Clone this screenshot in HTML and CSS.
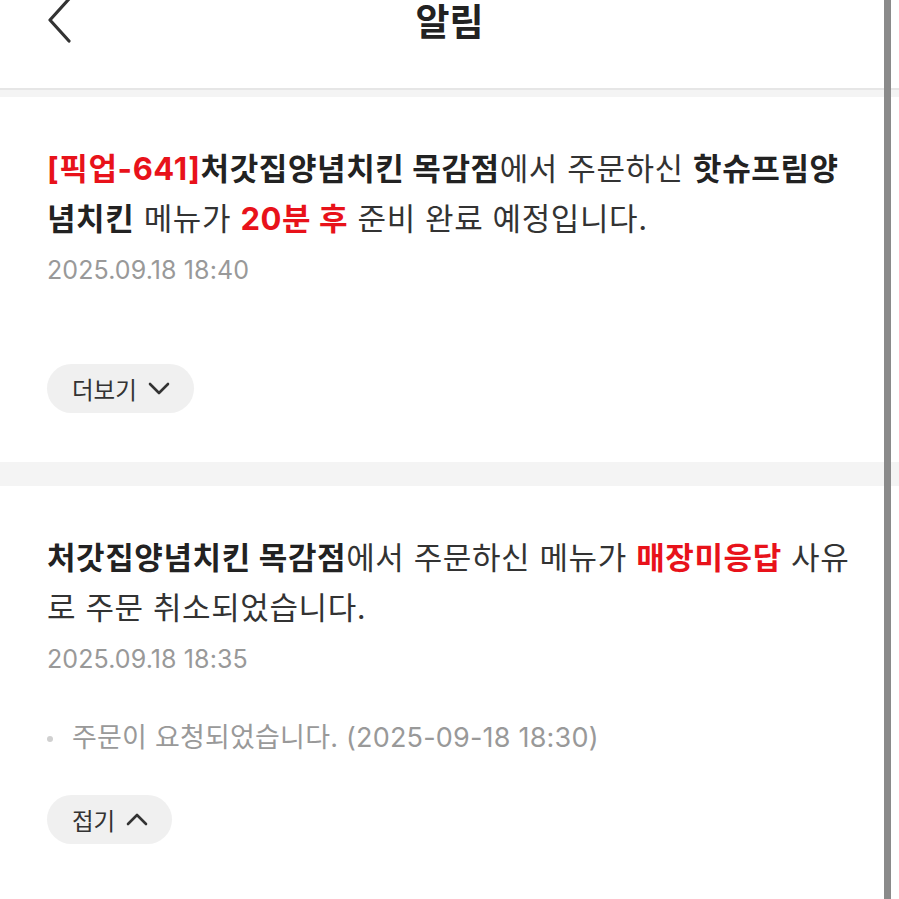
FILE: index.html
```html
<!DOCTYPE html>
<html lang="ko">
<head>
    <meta charset="UTF-8">
    <meta name="viewport" content="width=device-width, initial-scale=1.0">
    <title>알림</title>
    <link rel="stylesheet" href="styles.css">
</head>
<body>
    <header class="topbar">
        <a class="back" href="#">
            <svg width="28" height="46" viewBox="0 0 28 46"><path d="M24 2 L5 23 L24 44" fill="none" stroke="#333" stroke-width="3.2" stroke-linecap="round" stroke-linejoin="round"/></svg>
        </a>
        <h1>알림</h1>
    </header>

    <div class="list">
        <section class="notice">
            <p class="message"><span class="red strong">[픽업-641]</span><strong>처갓집양념치킨 목감점</strong>에서 주문하신 <strong>핫슈프림양념치킨</strong> 메뉴가 <span class="red strong">20분 후</span> 준비 완료 예정입니다.</p>
            <div class="date">2025.09.18 18:40</div>
            <button class="toggle more">더보기
                <svg width="22" height="13" viewBox="0 0 22 13"><path d="M2 2 L11 11 L20 2" fill="none" stroke="#333" stroke-width="2.6" stroke-linecap="round" stroke-linejoin="round"/></svg>
            </button>
        </section>

        <section class="notice">
            <p class="message"><strong>처갓집양념치킨 목감점</strong>에서 주문하신 메뉴가 <span class="red strong">매장미응답</span> 사유로 주문 취소되었습니다.</p>
            <div class="date">2025.09.18 18:35</div>
            <ul class="history">
                <li>주문이 요청되었습니다. (2025-09-18 18:30)</li>
            </ul>
            <button class="toggle">접기
                <svg width="22" height="13" viewBox="0 0 22 13"><path d="M2 11 L11 2 L20 11" fill="none" stroke="#333" stroke-width="2.6" stroke-linecap="round" stroke-linejoin="round"/></svg>
            </button>
        </section>
    </div>

    <div class="edge"></div>
</body>
</html>
```

FILE: styles.css
```css
body {
    margin: 0;
    padding: 0;
    font-family: Inter, "Noto Sans CJK KR", "Noto Sans", sans-serif;
    background-color: #fff;
    color: #333;
}
.topbar {
    position: relative;
    height: 88px;
    border-bottom: 2px solid #e6e6e6;
    display: flex;
    justify-content: center;
    align-items: flex-start;
}
.back {
    position: absolute;
    left: 45px;
    top: -3px;
}
.topbar h1 {
    margin: 0;
    font-size: 37px;
    font-weight: 700;
    line-height: 46px;
    color: #222;
}
.list {
    padding-top: 7px;
    background-color: #f4f4f4;
}
.notice {
    background-color: #fff;
    padding: 47px 47px 49px 47px;
    margin-bottom: 24px;
}
.message {
    margin: 0;
    font-size: 31px;
    line-height: 50px;
    color: #333;
    letter-spacing: 0.6px;
}
.message strong, .strong {
    font-weight: 700;
    color: #222;
}
.red, .message .red {
    color: #e8121a;
}
.date {
    margin-top: 11px;
    font-size: 25px;
    line-height: 30px;
    color: #999;
    letter-spacing: 0.1px;
}
.history {
    list-style: none;
    margin: 49px 0 0 0;
    padding: 0;
}
.history li {
    position: relative;
    padding-left: 25px;
    font-size: 27px;
    line-height: 30px;
    color: #999;
    letter-spacing: 0.2px;
}
.history li::before {
    content: "";
    position: absolute;
    left: 0;
    top: 13px;
    width: 6px;
    height: 6px;
    border-radius: 50%;
    background-color: #d0d0d0;
}
.toggle {
    display: flex;
    align-items: center;
    gap: 11px;
    height: 49px;
    padding: 0 24px 0 25px;
    margin-top: 42px;
    border: none;
    border-radius: 25px;
    background-color: #f0f0f0;
    font-family: inherit;
    font-size: 23.5px;
    color: #333;
}
.toggle.more {
    margin-top: 79px;
}
.edge {
    position: fixed;
    top: 0;
    bottom: 0;
    left: 884px;
    width: 7px;
    background-color: #8a8a8a;
}
```
